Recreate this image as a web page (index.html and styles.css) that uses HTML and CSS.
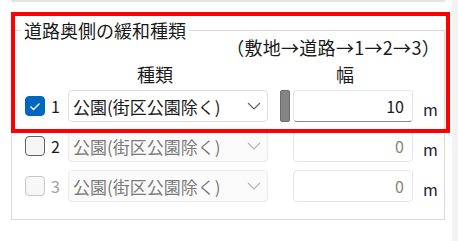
FILE: index.html
```html
<!DOCTYPE html>
<html lang="ja">
<head>
    <meta charset="UTF-8">
    <title>道路奥側の緩和種類</title>
    <link rel="stylesheet" href="styles.css">
</head>
<body>
    <div class="page">
        <div class="main">
            <div class="prev-group"></div>

            <fieldset class="group">
                <legend>道路奥側の緩和種類</legend>
                <div class="head-order">（敷地→道路→1→2→3）</div>
                <div class="head-cols">
                    <span class="head-kind">種類</span>
                    <span class="head-width">幅</span>
                </div>

                <div class="row">
                    <div class="check checked">
                        <svg width="20" height="20" viewBox="0 0 20 20"><polyline points="5.5,10.5 8.5,13.5 14.5,7.5" fill="none" stroke="#fff" stroke-width="1.3"/></svg>
                    </div>
                    <span class="num">1</span>
                    <div class="combo">
                        <span>公園(街区公園除く)</span>
                        <svg width="14" height="8" viewBox="0 0 14 8"><polyline points="1,1 7,7 13,1" fill="none" stroke="#5f5f5f" stroke-width="1.2"/></svg>
                    </div>
                    <div class="handle"></div>
                    <div class="field active">10</div>
                    <span class="unit">m</span>
                </div>

                <div class="row">
                    <div class="check"></div>
                    <span class="num">2</span>
                    <div class="combo disabled">
                        <span>公園(街区公園除く)</span>
                        <svg width="14" height="8" viewBox="0 0 14 8"><polyline points="1,1 7,7 13,1" fill="none" stroke="#b5b5b5" stroke-width="1.2"/></svg>
                    </div>
                    <div class="handle blank"></div>
                    <div class="field">0</div>
                    <span class="unit">m</span>
                </div>

                <div class="row">
                    <div class="check disabled"></div>
                    <span class="num muted">3</span>
                    <div class="combo disabled">
                        <span>公園(街区公園除く)</span>
                        <svg width="14" height="8" viewBox="0 0 14 8"><polyline points="1,1 7,7 13,1" fill="none" stroke="#b5b5b5" stroke-width="1.2"/></svg>
                    </div>
                    <div class="handle blank"></div>
                    <div class="field">0</div>
                    <span class="unit">m</span>
                </div>
            </fieldset>

            <div class="highlight"></div>
        </div>
        <div class="scroll-track"></div>
    </div>
</body>
</html>
```

FILE: styles.css
```css
body {
    margin: 0;
    background-color: #fff;
    font-family: "Noto Sans CJK JP", "Noto Sans", sans-serif;
    color: #1a1a1a;
}
.page {
    display: flex;
    width: 458px;
    height: 241px;
    overflow: hidden;
}
.main {
    position: relative;
    width: 452px;
    padding-left: 11px;
    box-sizing: border-box;
}
.scroll-track {
    width: 6px;
    background-color: #f3f3f3;
}
.prev-group {
    width: 434px;
    height: 2px;
    background-color: #e3e3e3;
}
.group {
    width: 434px;
    margin: 20px 0 0 0;
    padding: 0 0 17px 0;
    box-sizing: border-box;
    border: 1px solid #dadada;
}
.group legend {
    margin-left: 9px;
    padding: 0 3px;
    font-size: 18px;
    line-height: 16px;
}
.head-order {
    font-size: 18px;
    line-height: 18px;
    text-align: right;
    padding-right: 4px;
    letter-spacing: 0.3px;
}
.head-cols {
    display: flex;
    margin-top: 8px;
    font-size: 18px;
    line-height: 20px;
}
.head-kind {
    margin-left: 125px;
}
.head-width {
    margin-left: 163px;
}
.row {
    display: flex;
    align-items: center;
    height: 32px;
    margin-top: 8px;
}
.head-cols + .row {
    margin-top: 6px;
}
.check {
    width: 20px;
    height: 20px;
    margin-left: 13px;
    box-sizing: border-box;
    border: 1px solid #626262;
    border-radius: 4px;
    background-color: #f5f5f5;
}
.check svg {
    display: block;
    margin: -1px;
}
.check.checked {
    background-color: #0067c0;
    border-color: #0067c0;
}
.check.disabled {
    border-color: #c6c6c6;
    background-color: #f7f7f7;
}
.num {
    width: 23px;
    padding-left: 6px;
    box-sizing: border-box;
    font-size: 16px;
}
.num.muted {
    color: #a0a0a0;
}
.combo {
    display: flex;
    align-items: center;
    justify-content: space-between;
    width: 200px;
    height: 32px;
    padding: 0 6px 0 4px;
    box-sizing: border-box;
    border: 1px solid #dedede;
    border-radius: 4px;
    background-color: #fff;
    font-size: 17px;
}
.combo.disabled {
    background-color: #fafafa;
    border-color: #ebebeb;
    color: #7c7c7c;
}
.handle {
    width: 10px;
    height: 32px;
    margin-left: 12px;
    box-sizing: border-box;
    border: 1px solid #6e6e6e;
    border-radius: 2px;
    background-color: #858585;
}
.handle.blank {
    visibility: hidden;
}
.field {
    width: 120px;
    height: 32px;
    margin-left: 3px;
    padding-right: 8px;
    box-sizing: border-box;
    border: 1px solid #e5e5e5;
    border-radius: 4px;
    background-color: #fff;
    font-size: 16px;
    line-height: 30px;
    text-align: right;
    color: #8c8478;
}
.field.active {
    border-bottom-color: #8a8a8a;
    color: #1a1a2a;
}
.unit {
    margin-left: 10px;
    margin-top: 6px;
    font-size: 16px;
    color: #1c1c3a;
}
.highlight {
    position: absolute;
    left: 11px;
    top: 12px;
    width: 439px;
    height: 121px;
    box-sizing: border-box;
    border: 4px solid #ff0000;
}
```
